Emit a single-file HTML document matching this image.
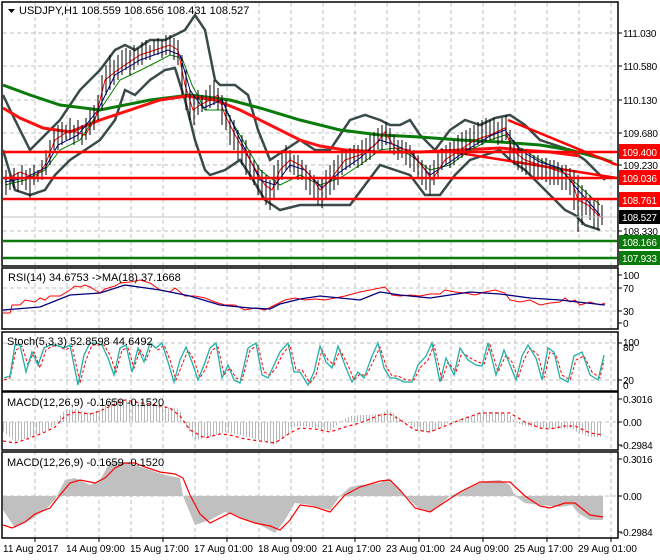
<!DOCTYPE html>
<html><head><meta charset="utf-8"><style>
html,body{margin:0;padding:0;background:#fff;}
svg{display:block;font-family:"Liberation Sans",sans-serif;}
</style></head><body>
<svg width="660" height="560" viewBox="0 0 660 560" xmlns="http://www.w3.org/2000/svg">
<defs>
<pattern id="hist" width="3" height="10" patternUnits="userSpaceOnUse"><rect x="0" y="0" width="1" height="10" fill="#b8b8b8"/></pattern>
<clipPath id="cm"><rect x="3" y="3" width="614" height="262"/></clipPath>
</defs>
<rect width="660" height="560" fill="#fff"/>
<g stroke="#c0c0c0" stroke-dasharray="4,3" stroke-width="1">
<path d="M35 3V538M67 3V538M99 3V538M131 3V538M163 3V538M195 3V538M227 3V538M259 3V538M291 3V538M323 3V538M355 3V538M387 3V538M419 3V538M451 3V538M483 3V538M515 3V538M547 3V538M579 3V538M611 3V538"/>
<path d="M3 33H617M3 66H617M3 100H617M3 133H617M3 165H617M3 231H617M3 288H617M3 311H617M3 343H617M3 380H617M3 422H617M3 496H617"/>
</g>
<g clip-path="url(#cm)">
<g fill="none" stroke="#3a4a4a" stroke-width="2.5">
<polyline points="3,95 15,120 30,150 45,135 60,120 80,90 100,70 115,50 125,45 135,50 150,40 165,40 175,35 185,30 195,15 205,30 215,80 220,85 235,85 248,95 258,130 270,160 285,150 300,140 315,150 330,150 340,135 350,120 365,115 380,120 390,125 400,125 410,120 420,135 435,150 450,130 465,120 480,125 495,118 510,115 525,125 540,140 555,145 570,150 585,160 600,175 605,180"/>
<polyline points="3,150 15,190 30,195 45,190 55,175 70,160 85,150 100,140 115,120 125,90 135,95 150,80 165,70 175,68 185,100 195,140 205,170 210,175 225,170 240,160 250,175 265,200 280,210 300,205 320,205 335,205 350,205 365,185 380,165 395,170 410,175 425,195 440,195 455,175 470,160 485,155 500,150 510,160 525,170 540,185 555,200 565,210 575,215 585,225 600,230"/>
</g>
<polyline fill="none" stroke="#0a7a0a" stroke-width="3" points="3,85 30,95 60,105 100,110 150,100 190,95 230,100 260,108 300,120 340,130 380,135 420,137 460,140 500,142 540,145 570,150 600,158 612,162"/>
<polyline fill="none" stroke="#ff1010" stroke-width="3" points="3,108 20,118 43,128 70,132 100,120 130,110 160,100 187,96 215,100 240,110 270,125 300,140 320,146 345,150 380,152 420,152 460,150 500,148 520,150 550,152 580,156"/>
<g stroke="#ff0000" stroke-width="2.5">
<line x1="508" y1="120" x2="617" y2="165"/>
<line x1="440" y1="150" x2="617" y2="178"/>
</g>
<polyline fill="none" stroke="#008000" stroke-width="1" points="5,185 25,180 45,170 60,150 80,140 100,110 120,80 145,68 170,55 182,58 192,85 205,110 225,110 240,135 260,170 280,185 300,175 320,185 340,178 360,165 380,150 395,148 410,155 430,170 450,165 470,150 490,140 505,135 520,148 540,160 560,170 578,185 600,205"/>
<polyline fill="none" stroke="#000090" stroke-width="1" points="5,182 25,178 45,168 58,145 78,135 98,110 115,75 140,60 168,50 180,55 190,90 203,108 222,100 238,135 260,180 275,185 290,165 305,170 322,188 340,172 360,158 380,140 395,145 410,152 430,175 450,162 470,148 490,136 505,130 520,150 540,162 560,168 578,190 600,215"/>
<polyline fill="none" stroke="#ff0000" stroke-width="1" points="5,180 20,172 35,178 45,165 55,140 70,130 85,135 95,120 105,80 115,72 125,65 140,55 155,50 170,45 178,50 185,85 193,110 200,105 210,100 218,95 225,115 235,135 250,160 265,185 272,190 280,170 290,160 300,165 310,175 320,190 330,180 345,160 360,155 375,145 385,132 395,148 410,150 425,170 432,180 445,160 460,150 475,140 490,135 505,128 512,150 525,160 540,165 555,170 570,175 578,200 588,205 598,215 603,218"/>
<g stroke="#000" stroke-width="1">
<path d="M6 170V195M10 175V190M14 168V188M18 172V192M22 165V185M26 170V190M30 168V200M34 165V185M38 170V182M42 160V180M46 150V175M50 140V165M54 130V150M58 125V150M62 122V145M66 125V140M70 118V140M74 125V145M78 120V140M82 125V145M86 118V140M90 110V135M94 105V130M98 95V120M102 75V110M106 65V95M110 55V90M114 60V85M118 55V80M122 50V75M126 48V70M130 50V75M134 45V70M138 48V65M142 42V65M146 40V60M150 45V60M154 40V55M158 38V55M162 40V58M166 35V55M170 35V55M174 38V60M178 40V65M182 55V95M186 70V110M190 90V120M194 95V125M198 90V115M202 95V112M206 90V110M210 85V108M214 80V105M218 88V110M222 95V125M226 100V130M230 115V145M234 120V150M238 130V160M242 135V165M246 140V175M250 150V180M254 160V185M258 165V195M262 170V200M266 175V205M270 180V210M274 165V200M278 160V190M282 150V180M286 145V170M290 150V172M294 155V175M298 155V180M302 160V180M306 165V190M310 170V195M314 175V200M318 180V205M322 178V208M326 170V200M330 165V195M334 160V190M338 155V185M342 150V175M346 150V170M350 148V168M354 145V165M358 145V168M362 140V165M366 138V162M370 135V160M374 132V155M378 128V150M382 125V150M386 122V145M390 128V152M394 135V155M398 140V160M402 140V158M406 142V165M410 145V168M414 150V172M418 155V178M422 160V185M426 165V190M430 165V195M434 160V185M438 152V178M442 148V170M446 145V165M450 142V168M454 140V165M458 135V160M462 132V158M466 130V155M470 128V150M474 125V148M478 122V145M482 120V145M486 118V142M490 120V140M494 118V140M498 122V145M502 118V142M506 115V140M510 130V160M514 140V165M518 145V170M522 148V172M526 150V175M530 152V175M534 155V178M538 155V180M542 158V180M546 158V182M550 160V185M554 160V185M558 162V185M562 165V190M566 165V190M570 168V195M574 170V210M578 175V232M582 185V225M586 190V215M590 195V220M594 198V228M598 200V230M602 205V225"/>
</g>
<g stroke-width="2.5">
<line x1="3" y1="152" x2="617" y2="152" stroke="#ff0000"/>
<line x1="3" y1="178" x2="617" y2="178" stroke="#ff0000"/>
<line x1="3" y1="199" x2="617" y2="199" stroke="#ff0000"/>
<line x1="3" y1="241" x2="617" y2="241" stroke="#0a7a0a"/>
<line x1="3" y1="258" x2="617" y2="258" stroke="#0a7a0a"/>
</g>
<line x1="3" y1="217" x2="617" y2="217" stroke="#c0c0c0" stroke-width="1"/>
</g>

<polyline fill="none" stroke="#ff0000" stroke-width="1" points="3,313 10,313 12,305 20,305 25,300 35,302 40,298 45,300 50,296 60,296 70,290 75,286 80,287 85,285 90,287 95,290 100,293 105,289 115,286 120,283 130,282 140,280 150,283 160,290 170,292 175,288 185,296 195,296 205,298 215,302 225,305 235,305 245,310 255,308 265,310 275,305 285,300 295,298 305,300 315,299 325,300 335,298 345,296 360,292 370,290 385,287 392,295 400,296 410,295 420,296 430,294 440,294 445,290 455,292 465,293 475,295 485,292 495,290 505,293 510,300 520,302 530,300 540,305 550,303 560,302 565,298 570,302 575,300 580,305 590,302 600,305 605,303"/>
<polyline fill="none" stroke="#000080" stroke-width="1.3" points="3,310 40,307 70,295 100,293 125,285 160,290 190,296 220,305 250,308 270,309 280,304 300,299 320,296 340,298 360,300 380,292 400,295 430,298 470,292 500,294 530,298 560,300 605,305"/>

<polyline fill="none" stroke="#ff0000" stroke-width="1" stroke-dasharray="3,2" points="4,380 10,378 16,350 22,346 28,365 34,352 40,368 46,350 52,346 58,346 66,350 72,346 80,383 86,360 92,345 98,345 104,345 110,355 116,372 122,350 128,348 134,368 140,350 146,360 152,345 158,350 164,345 170,360 176,380 182,365 188,350 194,360 200,378 206,368 212,350 218,347 224,375 230,368 236,378 242,380 250,350 258,345 264,372 270,375 276,368 282,355 290,345 296,370 302,370 310,383 316,375 322,350 328,360 334,365 340,350 348,365 354,380 360,374 366,376 374,360 380,347 386,366 392,376 398,376 406,380 414,380 420,368 428,360 434,345 442,380 448,362 456,372 462,352 470,358 478,362 484,364 490,345 498,372 506,355 512,362 518,378 524,360 530,348 538,355 544,378 550,352 556,355 562,375 570,380 576,360 584,356 592,372 600,378 604,360"/>
<polyline fill="none" stroke="#20b0a8" stroke-width="1.3" points="4,378 10,376 15,345 20,345 26,372 32,352 38,365 44,348 50,345 56,345 64,348 70,345 78,385 84,355 90,343 96,343 102,345 108,358 114,375 120,348 126,345 132,372 138,348 144,362 150,343 156,348 162,343 168,362 174,382 180,360 186,347 192,362 198,380 204,365 210,348 216,343 222,378 228,365 234,380 240,383 248,348 256,343 262,375 268,378 274,365 280,352 288,343 294,372 300,372 308,385 314,372 320,346 326,362 332,368 338,346 346,368 352,382 358,372 364,378 372,356 378,343 384,368 390,378 396,378 404,382 412,382 418,365 426,356 432,343 440,382 446,358 454,375 460,348 468,360 476,365 482,366 488,343 496,375 504,350 510,365 516,380 522,356 528,345 536,358 542,380 548,348 554,352 560,378 568,382 574,356 582,352 590,375 598,380 604,355"/>

<polygon fill="url(#hist)" points="3,422 3,431 15,442 30,437 45,431 55,425 60,416 65,410 75,409 90,413 100,410 110,399 125,399 135,401 150,404 165,407 180,409 183,422 195,440 210,437 225,432 240,435 260,440 275,445 285,437 295,426 310,427 330,431 340,422 350,416 360,415 380,414 388,410 395,415 405,421 420,431 432,432 440,428 450,422 460,419 475,415 485,412 500,412 510,415 515,422 525,426 540,428 560,429 572,428 578,433 590,437 603,437 603,422"/>
<polyline fill="none" stroke="#ff0000" stroke-width="1.2" stroke-dasharray="3,3" points="3,441 15,443 30,438 45,432 55,427 65,416 75,412 90,414 100,411 115,404 125,400 135,402 150,404 160,406 170,408 180,416 190,430 205,438 220,434 230,435 245,439 260,441 275,443 290,433 300,428 315,429 330,432 345,427 360,423 380,415 390,414 400,420 415,430 430,432 445,426 460,420 480,413 510,413 525,422 540,428 550,429 565,426 575,426 590,433 603,435"/>

<polygon fill="#c0c0c0" points="3,496 3,510 15,528 30,520 45,510 55,500 60,490 65,480 75,478 90,485 100,480 110,462 125,462 135,465 150,470 165,475 180,478 183,496 195,525 210,520 225,512 240,518 260,525 275,533 285,520 295,503 310,505 330,510 340,496 350,487 360,485 380,483 388,478 395,485 405,495 420,510 432,512 440,505 450,496 460,492 475,485 485,481 500,480 510,485 515,496 525,503 540,505 560,507 572,505 578,513 590,520 603,520 603,496"/>
<polyline fill="none" stroke="#ff0000" stroke-width="1.2" points="3,525 12,528 25,522 35,514 50,508 60,495 70,483 80,480 95,483 105,478 115,468 125,463 135,463 145,467 160,472 175,474 183,478 190,495 200,514 210,523 220,518 230,513 240,518 255,523 270,526 280,530 290,520 300,505 315,507 330,512 345,495 360,487 380,481 390,480 400,490 415,508 430,512 445,502 460,492 480,482 510,482 525,496 540,506 550,508 565,503 575,503 590,515 603,517"/>

<g fill="none" stroke="#000" stroke-width="1.5">
<rect x="2" y="2" width="616" height="264"/>
<rect x="2" y="268" width="616" height="61"/>
<rect x="2" y="332" width="616" height="59"/>
<rect x="2" y="392" width="616" height="58"/>
<rect x="2" y="452" width="616" height="86"/>
</g>
<g stroke="#000" stroke-width="1"><path d="M618 33h4M618 66h4M618 100h4M618 133h4M618 165h4M618 231h4M618 275h4M618 288h4M618 311h4M618 323h4M618 343h4M618 380h4M618 399h4M618 422h4M618 445h4M618 459h4M618 496h4M618 532h4M35 538v4M99 538v4M163 538v4M227 538v4M291 538v4M355 538v4M419 538v4M483 538v4M547 538v4M611 538v4"/></g>

<g font-size="11" fill="#000">
<path d="M8 9h7l-3.5 4z" fill="#000"/>
<text x="19" y="14">USDJPY,H1  108.559 108.656 108.431 108.527</text>
<text x="8" y="281">RSI(14) 34.6753  -&gt;MA(18) 37.1668</text>
<text x="7" y="345">Stoch(5,3,3) 52.8598 44.6492</text>
<text x="7" y="406">MACD(12,26,9) -0.1659 -0.1520</text>
<text x="7" y="466">MACD(12,26,9) -0.1659 -0.1520</text>
<g font-size="10" letter-spacing="-0.2">
<text x="623" y="37">111.030</text>
<text x="623" y="70">110.580</text>
<text x="623" y="104">110.130</text>
<text x="623" y="137">109.680</text>
<text x="623" y="169">109.230</text>
<text x="623" y="235">108.330</text>
<text x="623" y="279">100</text>
<text x="623" y="292">70</text>
<text x="623" y="315">30</text>
<text x="623" y="327">0</text>
<text x="623" y="346">100</text>
<text x="623" y="351">80</text>
<text x="623" y="384">20</text>
<text x="623" y="389">0</text>
<text x="623" y="403">0.3016</text>
<text x="623" y="426">0.00</text>
<text x="620" y="449">-0.2984</text>
<text x="623" y="463">0.3016</text>
<text x="623" y="500">0.00</text>
<text x="620" y="536">-0.2984</text>
</g>
<rect x="619" y="144" width="42" height="15" fill="#ff0000"/>
<rect x="619" y="170" width="42" height="15" fill="#ff0000"/>
<rect x="619" y="192" width="42" height="15" fill="#ff0000"/>
<rect x="619" y="210" width="42" height="14" fill="#000"/>
<rect x="619" y="235" width="42" height="14" fill="#0a7a0a"/>
<rect x="619" y="251" width="42" height="14" fill="#0a7a0a"/>
<g fill="#fff" font-size="10" letter-spacing="-0.2">
<text x="622" y="156">109.400</text>
<text x="622" y="182">109.036</text>
<text x="622" y="204">108.761</text>
<text x="622" y="221">108.527</text>
<text x="622" y="246">108.166</text>
<text x="622" y="262">107.933</text>
</g>
<g font-size="10">
<text x="3" y="552">11 Aug 2017</text>
<text x="66" y="552">14 Aug 09:00</text>
<text x="130" y="552">15 Aug 17:00</text>
<text x="194" y="552">17 Aug 01:00</text>
<text x="258" y="552">18 Aug 09:00</text>
<text x="322" y="552">21 Aug 17:00</text>
<text x="386" y="552">23 Aug 01:00</text>
<text x="450" y="552">24 Aug 09:00</text>
<text x="514" y="552">25 Aug 17:00</text>
<text x="578" y="552">29 Aug 01:00</text>
</g>
</g>
</svg>
</body></html>
